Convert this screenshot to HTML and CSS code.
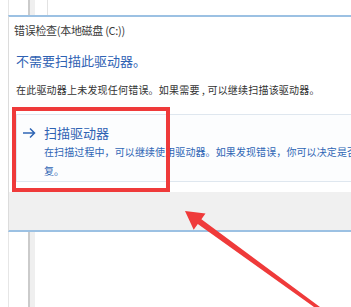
FILE: index.html
```html
<!DOCTYPE html>
<html lang="zh-CN">
<head>
  <meta charset="UTF-8">
  <meta name="viewport" content="width=device-width, initial-scale=1">
  <title>错误检查</title>
  <link rel="stylesheet" href="styles.css">
</head>
<body>

  <div class="bg-window">
    <div class="rail"></div>
    <div class="inner-panel"></div>
  </div>

  <div class="dialog">
    <div class="dialog-body">
      <div class="title">错误检查(本地磁盘 (C:))</div>
      <h2 class="headline">不需要扫描此驱动器。</h2>
      <p class="message">在此驱动器上未发现任何错误。如果需要 , 可以继续扫描该驱动器。</p>

      <div class="command-link">
        <svg class="cmd-arrow" width="14" height="12" viewBox="0 0 14 12">
          <path d="M1 6H12.5M8 1.5L12.5 6L8 10.5" fill="none" stroke="#2f66b5" stroke-width="1.5"/>
        </svg>
        <div class="cmd-text">
          <div class="cmd-title">扫描驱动器</div>
          <div class="cmd-desc">在扫描过程中，可以继续使用驱动器。如果发现错误，你可以决定是否对其进行修<br>复。</div>
        </div>
      </div>
    </div>
    <div class="dialog-footer"></div>
  </div>

  <div class="bg-window bottom">
    <div class="rail"></div>
  </div>

  <!-- annotations drawn over the screenshot -->
  <div class="highlight"></div>
  <svg class="pointer" width="351" height="307" viewBox="0 0 351 307">
    <polygon points="185,211 205.5,213.5 201.4,219.2 320,307 314,307 197.8,224 193.7,229.7" fill="#ef3a3a"/>
  </svg>

</body>
</html>
```

FILE: styles.css
```css
body {
  margin: 0;
  width: 351px;
  height: 307px;
  overflow: hidden;
  position: relative;
  background: #fff;
  font-family: "Noto Sans CJK SC", "Noto Sans", sans-serif;
  color: #333;
}
.bg-window {
  height: 15px;
  display: flex;
  border-left: 1px solid #e6e6e6;
  margin-left: 8px;
}
.bg-window .rail {
  margin-left: 19px;
  width: 2px;
  background: #cbcbcb;
  border-right: 5px solid #efefef;
}
.bg-window .inner-panel {
  margin-left: 12px;
  border-left: 1px solid #e2e2e2;
}
.bg-window.bottom {
  height: 77px;
}
.dialog {
  margin-left: 8px;
  width: 440px;
  border-left: 1px solid #dcdcdc;
  border-top: 2px solid #9cc1e3;
  border-bottom: 2px solid #9cc1e3;
}
.dialog-body {
  padding: 6px 0 10px 7px;
}
.title {
  font-size: 11px;
  line-height: 14px;
  color: #3a3a3a;
  margin-left: -2px;
  letter-spacing: -0.3px;
}
.headline {
  margin: 15px 0 0;
  font-size: 13px;
  line-height: 18px;
  font-weight: normal;
  color: #2f62b3;
}
.message {
  margin: 13px 0 0;
  font-size: 10px;
  line-height: 14px;
  letter-spacing: 0.2px;
  color: #333;
}
.command-link {
  margin-top: 17px;
  height: 66px;
  border: 1px solid #dfe7ef;
  background: #fcfdfe;
  display: flex;
  align-items: flex-start;
  padding-left: 5px;
}
.cmd-arrow {
  margin-top: 12px;
  flex: none;
}
.cmd-text {
  margin-left: 8px;
  padding-top: 9px;
}
.cmd-title {
  font-size: 13px;
  line-height: 18px;
  color: #2f62b3;
}
.cmd-desc {
  font-size: 10px;
  line-height: 19px;
  letter-spacing: 0.1px;
  color: #2f66b5;
  white-space: nowrap;
}
.dialog-footer {
  height: 38px;
  background: #f0f0f0;
}
.highlight {
  position: absolute;
  left: 12px;
  top: 107px;
  width: 150px;
  height: 77px;
  border: 4px solid #ef3a3a;
}
.pointer {
  position: absolute;
  left: 0;
  top: 0;
}
```
